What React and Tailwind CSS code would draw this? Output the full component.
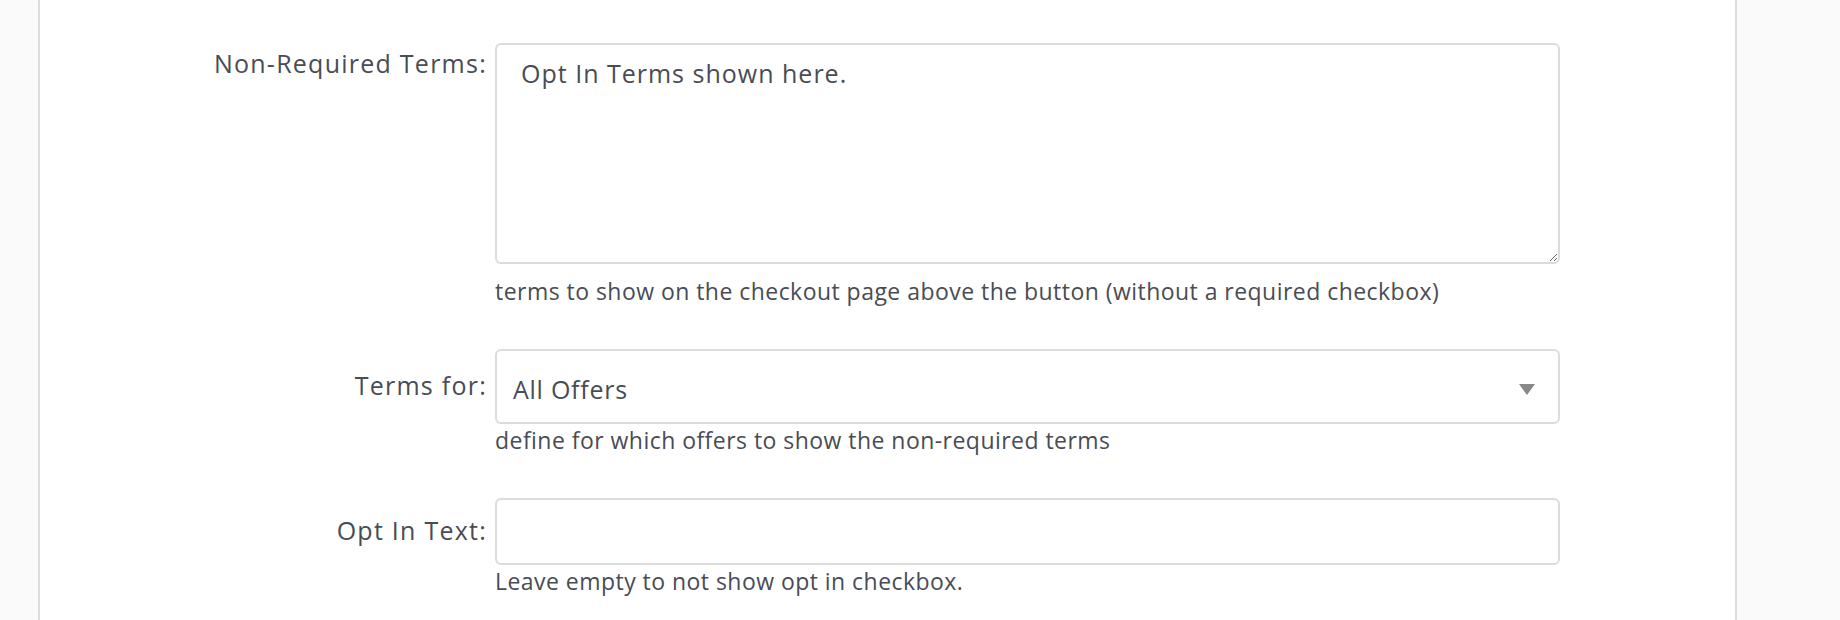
import React from 'react';

const labelCls = "w-[455px] shrink-0 pr-2 text-right text-[25px] leading-[36px] tracking-[0.05em]";
const helpCls = "text-[23px] leading-[33px] tracking-[0.02em]";

const FormRow = ({ label, labelPad, children, className = '' }) => (
  <div className={`flex ${className}`}>
    <label className={`${labelCls} ${labelPad}`}>{label}</label>
    <div className="w-[1065px] shrink-0">{children}</div>
  </div>
);

export default function App() {
  return (
    <div className="min-h-[620px] bg-[#fafafa] font-['Open_Sans',sans-serif] text-[#494c55]">
      <div className="ml-[38px] w-[1699px] min-h-[620px] border-x-2 border-[#dcdcdc] bg-white pt-[43px]">
        <FormRow label="Non-Required Terms:" labelPad="pt-[2px]">
          <textarea
            className="block h-[221px] w-full rounded-[6px] border-2 border-[#dcdcdc] px-[24px] pt-[9px] text-[25px] leading-[39px] tracking-[0.04em] text-[#494c55] outline-none"
            defaultValue="Opt In Terms shown here."
          />
          <p className={`mt-[11px] ${helpCls}`}>
            terms to show on the checkout page above the button (without a required checkbox)
          </p>
        </FormRow>

        <FormRow label="Terms for:" labelPad="pt-[18px]" className="mt-[41px]">
          <div className="relative">
            <select
              className="block h-[75px] w-full appearance-none rounded-[6px] border-2 border-[#dcdcdc] bg-white pl-[16px] pt-[7px] text-[25px] tracking-[0.03em] text-[#494c55] outline-none"
              defaultValue="all"
            >
              <option value="all">All Offers</option>
              <option value="selected">Selected Offers</option>
            </select>
            <svg className="pointer-events-none absolute right-[25px] top-[35px]" width="16" height="11" viewBox="0 0 16 11">
              <polygon points="0,0 16,0 8,11" fill="#888888" />
            </svg>
          </div>
          <p className={helpCls}>define for which offers to show the non-required terms</p>
        </FormRow>

        <FormRow label="Opt In Text:" labelPad="pt-[14px]" className="mt-[41px]">
          <input
            type="text"
            className="block h-[67px] w-full rounded-[6px] border-2 border-[#dcdcdc] px-[16px] text-[25px] text-[#494c55] outline-none"
          />
          <p className={helpCls}>Leave empty to not show opt in checkbox.</p>
        </FormRow>
      </div>
    </div>
  );
}
